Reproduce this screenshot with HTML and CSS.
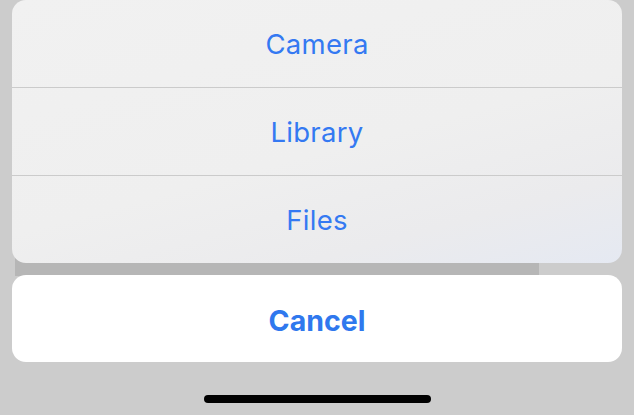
FILE: index.html
```html
<!DOCTYPE html>
<html>
<head>
<meta charset="utf-8">
<link rel="stylesheet" href="styles.css">
</head>
<body>
<div class="screen">
  <div class="sheet">
    <div class="group">
      <div class="action">Camera</div>
      <div class="action">Library</div>
      <div class="action">Files</div>
    </div>
    <div class="cancel">Cancel</div>
  </div>
  <div class="home-bar"><div class="indicator"></div></div>
</div>
</body>
</html>
```
FILE: styles.css
```css
html, body {
  margin: 0;
  padding: 0;
}
body {
  width: 634px;
  height: 415px;
  overflow: hidden;
  background:
    linear-gradient(#b6b6b6, #b6b6b6) 15px 240px / 524px 36px no-repeat,
    #cccccc;
  font-family: Inter, "Liberation Sans", sans-serif;
}
.screen {
  display: flex;
  flex-direction: column;
  height: 415px;
}
.sheet {
  display: flex;
  flex-direction: column;
  gap: 12px;
  padding: 0 12px;
}
.group {
  display: flex;
  flex-direction: column;
  border-radius: 14px;
  overflow: hidden;
  background: linear-gradient(165deg, #f1f1f1 0%, #efefef 55%, #ebebed 80%, #e5e9f2 100%);
}
.action {
  height: 87px;
  display: flex;
  align-items: center;
  justify-content: center;
  color: #3479f2;
  font-size: 27.5px;
  font-weight: 400;
  letter-spacing: 0.3px;
  border-top: 1px solid #cbcbcb;
}
.action:first-child {
  border-top: none;
}
.cancel {
  height: 87px;
  display: flex;
  align-items: center;
  justify-content: center;
  padding-top: 3px;
  box-sizing: border-box;
  background: #ffffff;
  border-radius: 14px;
  color: #2f78ee;
  font-size: 28.5px;
  font-weight: 700;
}
.home-bar {
  display: flex;
  justify-content: center;
  padding-top: 33px;
}
.indicator {
  width: 227px;
  height: 8px;
  border-radius: 4px;
  background: #000000;
}
```
